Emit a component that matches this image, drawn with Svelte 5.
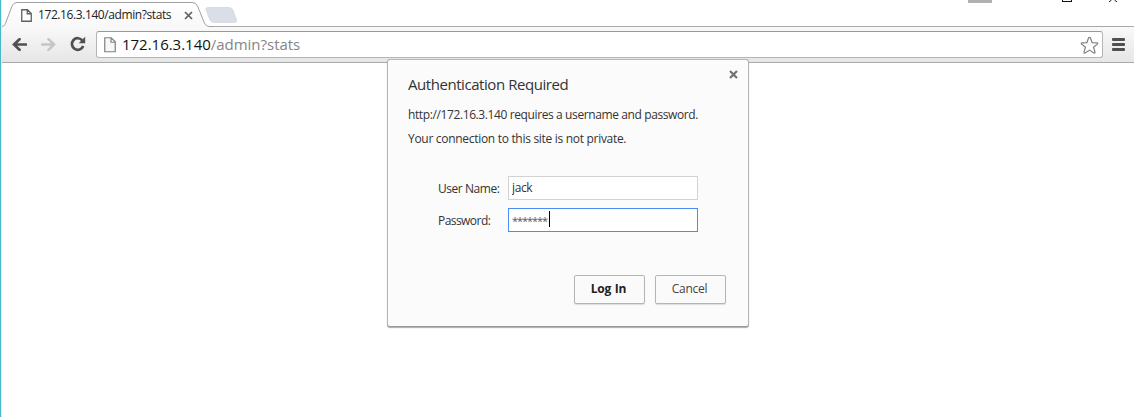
<script>
  let username = $state('jack');
</script>

<div class="window">
  <header class="tabs">
    <svg class="strip" width="1134" height="27" viewBox="0 0 1134 27">
      <defs>
        <linearGradient id="tab" x1="0" y1="0" x2="0" y2="1">
          <stop offset="0" stop-color="#fff" />
          <stop offset="1" stop-color="#f8f8f8" />
        </linearGradient>
      </defs>
      <path d="M212 26.5H1134" stroke="#a9a9a9" />
      <path d="M2 26.5C5 26 5 24 6 22L12 6Q13.5 2.5 17 2.5H192Q196 2.5 197.500 6L204 22Q205.500 26.500 210 26.500V27H2Z" fill="url(#tab)" />
      <path d="M2 26.500C5 26 5 24 6 22L12 6Q13.500 2.500 17 2.500H192Q196 2.500 197.500 6L204 22Q205.500 26.500 210 26.500H214" fill="none" stroke="#a0a0a0" />
      <path d="M208 7.500H229Q232 7.500 233 10L236.500 20Q237.500 22.500 234 22.500H214Q211 22.500 210 20L206 10Q205 7.500 208 7.500Z" fill="#dadfe7" stroke="#d0d4dc" stroke-width=".7" />
    </svg>
    <svg class="tabpage" width="11" height="14" viewBox="0 0 11 14">
      <path d="M.75 .75H6.500L10.250 4.500V12.250H.75ZM6.250 .75V4.750H10.250" fill="#fff" stroke="#606060" stroke-width="1.300" />
    </svg>
    <span class="tabtitle">172.16.3.140/admin?stats</span>
    <svg class="tabclose" width="9" height="9" viewBox="0 0 9 9">
      <path d="M1 1L8 8M8 1L1 8" stroke="#5f5f5f" stroke-width="1.700" />
    </svg>
    <div class="controls">
      <i></i>
      <svg width="10" height="2" viewBox="0 0 10 2"><path d="M0 1.500H10M.5 0V2M9.500 0V2" stroke="#111" /></svg>
      <svg width="10" height="2" viewBox="0 0 10 2"><path d="M3.500 0L1 2M6.500 0L9 2" stroke="#111" /></svg>
    </div>
  </header>

  <nav class="toolbar">
    <svg class="back" width="15" height="13" viewBox="0 0 15 13">
      <path d="M14 6.500H2M7.500 1.200L2 6.500L7.500 11.800" fill="none" stroke="#505050" stroke-width="2.700" stroke-linecap="round" />
    </svg>
    <svg class="forward" width="15" height="13" viewBox="0 0 15 13">
      <path d="M1 6.500H13M7.500 1.200L13 6.500L7.500 11.800" fill="none" stroke="#c5c5c5" stroke-width="2.500" stroke-linecap="round" />
    </svg>
    <svg class="reload" width="16" height="16" viewBox="0 0 16 16">
      <path d="M12.500 4.700A5.800 5.800 0 1 0 13.200 10" fill="none" stroke="#505050" stroke-width="2.700" />
      <path d="M15.200 .8V7.300H8.700Z" fill="#505050" />
    </svg>
    <div class="omnibox">
      <svg class="page" width="12" height="16" viewBox="0 0 12 16">
        <path d="M.75 .75H7.200L11.250 4.800V14.750H.75ZM7 .75V5.250H11.250" fill="#f8f8f8" stroke="#808080" stroke-width="1.200" />
      </svg>
      <span class="url">172.16.3.140<em>/admin?stats</em></span>
      <svg class="star" width="19" height="19" viewBox="0 0 19 19">
        <path d="M9.500 1.300Q10.300 1.300 10.500 2L12.100 6.600L17 6.800Q18.300 7.100 17.300 8.100L13.500 11.200L15 16.100Q15.100 17.400 13.900 16.900L9.500 14.100L5.100 16.900Q3.900 17.400 4 16.100L5.500 11.200L1.700 8.100Q.7 7.100 2 6.800L6.900 6.600L8.500 2Q8.700 1.300 9.500 1.300Z" fill="#fff" stroke="#808080" stroke-width="1.200" />
      </svg>
    </div>
    <div class="menu"><i></i><i></i><i></i></div>
  </nav>

  <main>
    <section class="dialog">
      <svg class="close" width="9" height="9" viewBox="0 0 9 9">
        <path d="M1 1L8 8M8 1L1 8" stroke="#727272" stroke-width="2.200" />
      </svg>
      <h1><span>Authentication Required</span></h1>
      <p class="needs">http://172.16.3.140 requires a username and password.</p>
      <p class="private">Your connection to this site is not private.</p>
      <div class="form">
        <label class="ul" for="user">User Name:</label>
        <input id="user" bind:value={username} />
        <span class="pl">Password:</span>
        <div class="password"><span>*******</span><i></i></div>
      </div>
      <div class="buttons">
        <button class="login">Log In</button>
        <button class="cancel">Cancel</button>
      </div>
    </section>
  </main>
</div>

<style>
  :global(body) { margin: 0; overflow: hidden; background: #fff; }
  .window { position: relative; box-sizing: border-box; width: 1134px; height: 417px; border-left: 1px solid #48b9cc; box-shadow: inset 1px 0 #d9f1f5; font: 12px/16px "Open Sans", "Noto Sans", sans-serif; color: #333; background: #fff; }
  svg { display: block; flex: none; }
  span, p, label, h1 { white-space: nowrap; }
  .tabs { height: 27px; display: flex; align-items: flex-start; position: relative; }
  .strip { position: absolute; left: -1px; top: 0; z-index: 0; }
  .tabpage, .tabtitle, .tabclose, .controls { position: relative; }
  .tabpage { margin: 9px 0 0 20px; }
  .tabtitle { width: 146px; margin: 7px 0 0 6px; letter-spacing: -.41px; color: #222; }
  .tabclose { margin-top: 11px; }
  .controls { display: flex; margin-left: auto; margin-right: 16px; }
  .controls i { width: 24px; height: 3px; background: #b1b1b1; margin-right: 70px; }
  .controls svg + svg { margin-left: 36px; }
  .toolbar { box-sizing: border-box; height: 36px; margin-left: 1px; display: flex; align-items: flex-start; background: linear-gradient(#f9f9f9, #e6e6e6); border-bottom: 1px solid #aaa; }
  .back { margin: 11px 0 0 10px; }
  .forward { margin: 11px 0 0 14px; }
  .reload { margin: 9px 0 0 14px; }
  .omnibox { box-sizing: border-box; width: 1007px; height: 27px; margin: 4px 0 0 10px; border: 1px solid #b5b5b5; border-top-color: #999; border-radius: 3px; background: #fff; display: flex; align-items: flex-start; }
  .page { margin: 5px 0 0 7px; }
  .url { margin: 2px 0 0 6px; font-size: 15px; line-height: 21px; letter-spacing: -.02px; color: #111; }
  .url em { font-style: normal; color: #858585; }
  .star { margin: 4px 3px 0 auto; }
  .menu { margin: 11px 0 0 9px; width: 13px; display: grid; gap: 2px; }
  .menu i { height: 3px; border-radius: 1px; background: #505050; }
  .dialog { position: absolute; left: 386px; top: 59px; box-sizing: border-box; width: 362px; height: 268px; padding: 14px 22px 0 20px; border: 1px solid #b5b5b5; border-bottom-color: #999; border-radius: 3px; box-shadow: 0 1px 1px #aaa; background: #fbfbfb; }
  .close { position: absolute; left: 341px; top: 10px; }
  h1 { margin: 0; font-size: 15px; line-height: 20px; font-weight: 400; letter-spacing: -.44px; }
  p { margin: 0; height: 24px; line-height: 16px; }
  .needs { margin-top: 13px; letter-spacing: -.39px; }
  .private { letter-spacing: -.3px; }
  .form { margin: 21px 0 0 30px; display: grid; grid-template-columns: 70px 190px; grid-template-rows: 24px 24px; row-gap: 8px; align-items: center; letter-spacing: -.45px; }
  .form label, .pl { padding-top: 2px; }
  .pl { letter-spacing: -.55px; }
  input, .password { box-sizing: border-box; width: 190px; height: 24px; border: 1px solid #d2d2d2; background: #fff; padding: 0 3px 1px; font: 12px/20px "Open Sans", sans-serif; color: #333; letter-spacing: -.4px; outline: none; border-radius: 0; }
  .password { display: flex; border-color: #4b8df8; padding-top: 2px; }
  .password span { font-size: 11px; letter-spacing: -1.060px; line-height: 19px; color: #555; }
  .password i { width: 1px; height: 16px; background: #000; margin-left: 2px; }
  .buttons { display: flex; justify-content: flex-end; gap: 10px; margin-top: 43px; }
  button { box-sizing: border-box; width: 71px; height: 29px; padding: 0 2px 1px 0; border: 1px solid #b5b5b5; border-radius: 2px; background: #fafafa; box-shadow: 0 1px 1px #ddd; font: 12px/16px "Open Sans", sans-serif; color: #444; letter-spacing: -.3px; }
  .login { font-weight: 700; color: #222; letter-spacing: -.25px; word-spacing: 1px; }
</style>
